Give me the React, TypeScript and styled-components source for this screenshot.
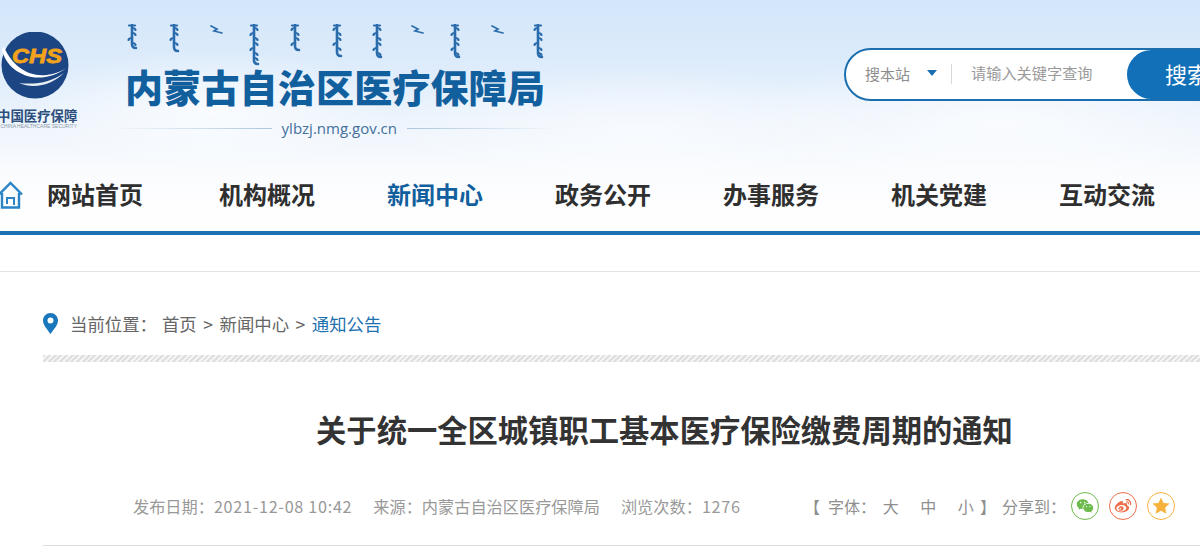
import React from 'react';
import styled, { createGlobalStyle } from 'styled-components';
import { RiWechatFill, RiWeiboFill, RiStarFill } from 'react-icons/ri';

const FONT = '"Noto Sans CJK SC", "Noto Sans", "Liberation Sans", sans-serif';

const GlobalStyle = createGlobalStyle`
  html, body {
    margin: 0;
    padding: 0;
    background: #fff;
    overflow: hidden;
  }
  body {
    font-family: ${FONT};
    color: #333;
  }
`;

const Page = styled.div`
  width: 1320px;
  height: 557px;
  overflow: hidden;
`;

const Header = styled.header`
  height: 231px;
  background:
    radial-gradient(ellipse 190px 60px at 210px 110px, rgba(255, 255, 255, 0.75), rgba(255, 255, 255, 0) 100%),
    radial-gradient(ellipse 260px 60px at 640px 125px, rgba(255, 255, 255, 0.55), rgba(255, 255, 255, 0) 100%),
    radial-gradient(ellipse 260px 70px at 1000px 120px, rgba(255, 255, 255, 0.7), rgba(255, 255, 255, 0) 100%),
    linear-gradient(180deg, #d3e6fa 0%, #deecfb 30%, #f0f6fd 58%, #fbfcfe 76%, #ffffff 100%);
`;

const TopRow = styled.div`
  height: 170px;
  display: flex;
  align-items: flex-start;
`;

const LogoBox = styled.div`
  width: 80px;
  margin-left: -3px;
  padding-top: 32px;
  flex: none;
`;

const LogoName = styled.div`
  font-size: 13.4px;
  line-height: 16px;
  font-weight: 700;
  color: #2d4f7c;
  white-space: nowrap;
  margin-top: 8px;
`;

const LogoSub = styled.div`
  font-family: "Liberation Sans", sans-serif;
  font-size: 5px;
  line-height: 6px;
  color: #8b98a8;
  white-space: nowrap;
  text-align: right;
`;

const TitleBlock = styled.div`
  margin-left: 48px;
  width: 435px;
  flex: none;
  padding-top: 24px;
`;

const ScriptMarks = styled.svg`
  display: block;
`;

const SiteTitle = styled.h1`
  margin: -7px 0 0 0;
  font-size: 38px;
  line-height: 50px;
  font-weight: 900;
  letter-spacing: 0.2px;
  color: #125f9e;
  white-space: nowrap;
`;

const Domain = styled.div`
  display: flex;
  align-items: center;
  gap: 10px;
  margin-top: 7px;
  margin-left: -15px;
  width: 447px;
  font-family: "Open Sans", "Noto Sans", sans-serif;
  font-size: 15px;
  line-height: 20px;
  color: #43709c;
  white-space: nowrap;
`;

const DomainRule = styled.span<{ $dir: 'left' | 'right' }>`
  flex: ${(p) => (p.$dir === 'left' ? '1' : '0 0 150px')};
  height: 1px;
  background: linear-gradient(
    ${(p) => (p.$dir === 'left' ? '90deg' : '270deg')},
    rgba(160, 190, 215, 0) 0%,
    rgba(160, 190, 215, 0.85) 100%
  );
`;

const SearchBox = styled.form`
  display: flex;
  align-items: stretch;
  box-sizing: border-box;
  margin: 48px 0 0 284px;
  width: 360px;
  height: 53px;
  flex: none;
  border: 2px solid #1b6fae;
  border-radius: 27px 0 0 27px;
  background: #fff;
`;

const ScopeSelect = styled.div`
  display: flex;
  align-items: center;
  width: 106px;
  flex: none;
  padding: 0 0 3px 19px;
  box-sizing: border-box;
  font-size: 15px;
  color: #8d8d8d;
  position: relative;
  &::after {
    content: '';
    position: absolute;
    right: 0;
    top: 14px;
    bottom: 15px;
    width: 1px;
    background: #d8d8d8;
  }
`;

const Caret = styled.i`
  width: 0;
  height: 0;
  margin-left: 17px;
  border-left: 5px solid transparent;
  border-right: 5px solid transparent;
  border-top: 6px solid #1b6fae;
`;

const SearchInput = styled.input`
  flex: none;
  width: 174px;
  box-sizing: content-box;
  border: 0;
  outline: 0;
  padding: 0 0 5px 19px;
  background: transparent;
  font-family: ${FONT};
  font-size: 15.2px;
  color: #333;
  &::placeholder {
    color: #9a9a9a;
    opacity: 1;
  }
`;

const SearchButton = styled.button`
  flex: 1;
  border: 0;
  padding: 0 0 3px 38px;
  text-align: left;
  margin-left: -18px;
  background: #1170b8;
  border-radius: 25px 0 0 25px;
  color: #fff;
  font-family: ${FONT};
  font-size: 22px;
  white-space: nowrap;
`;

const Nav = styled.nav`
  display: flex;
  align-items: center;
  height: 61px;
`;

const HomeLink = styled.div`
  display: flex;
  width: 48px;
  flex: none;
  margin-left: -1px;
  margin-top: -9px;
`;

const NavItem = styled.a<{ $active?: boolean }>`
  width: 168px;
  flex: none;
  font-size: 24px;
  line-height: 34px;
  font-weight: 700;
  margin-top: -14px;
  color: ${(p) => (p.$active ? '#125f9e' : '#2f2f2f')};
  white-space: nowrap;
  &:first-of-type {
    width: 172px;
  }
`;

const NavBar = styled.div`
  height: 4px;
  background: #1a72b5;
`;

const SubStrip = styled.div`
  height: 36px;
  border-bottom: 1px solid #e3e3e3;
`;

const Main = styled.main`
  padding-left: 43px;
`;

const Crumbs = styled.div`
  display: flex;
  align-items: center;
  height: 83px;
  padding-top: 20px;
  box-sizing: border-box;
  font-size: 17.4px;
  color: #666;
  white-space: nowrap;
`;

const CrumbLabel = styled.span`
  margin: 0 5px 0 12px;
`;

const CrumbSep = styled.span`
  margin: 0 6.5px;
  font-size: 17.5px;
`;

const CrumbCurrent = styled.span`
  color: #1d71b0;
`;

const Stripes = styled.div`
  height: 7px;
  background: repeating-linear-gradient(135deg, #dedede 0 2px, #f4f4f4 2px 4px);
`;

const ArticleTitle = styled.h2`
  margin: 0;
  padding-top: 45px;
  width: 1243px;
  text-align: center;
  font-size: 30.3px;
  line-height: 44px;
  font-weight: 700;
  color: #333;
  white-space: nowrap;
`;

const MetaRow = styled.div`
  display: flex;
  align-items: center;
  margin-top: 41px;
  width: 1157px;
  box-sizing: border-box;
  padding: 0 25px 26px 90px;
  height: 54px;
  border-bottom: 1px solid #dcdcdc;
  font-size: 16.2px;
  color: #999;
  white-space: nowrap;
`;

const MetaText = styled.span`
  margin-right: 21px;
`;

const MetaNum = styled.span`
  letter-spacing: 0.7px;
`;

const MetaTools = styled.div`
  display: flex;
  align-items: center;
  margin-left: auto;
  font-size: 16px;
  color: #8f8f8f;
`;

const FontLabel = styled.span`
  margin: 0 -4px 0 8px;
`;

const SizeOption = styled.span`
  width: 37.5px;
  text-align: center;
`;

const BracketClose = styled.span`
  margin-left: -4.5px;
`;

const ShareLabel = styled.span`
  margin-left: 6px;
`;

const ShareIcon = styled.span<{ $color: string; $first?: boolean }>`
  display: flex;
  align-items: center;
  justify-content: center;
  box-sizing: border-box;
  width: 28px;
  height: 28px;
  margin-left: ${(p) => (p.$first ? '5px' : '10px')};
  border: 1px solid ${(p) => p.$color};
  border-radius: 50%;
  color: ${(p) => p.$color};
  font-size: 18px;
`;

const SHARE_COLORS = { wechat: '#6dbb4c', weibo: '#ee6d4a', star: '#f6b23c' };

const NAV_ITEMS = ['网站首页', '机构概况', '新闻中心', '政务公开', '办事服务', '机关党建', '互动交流'];

// decorative strokes of the vertical line of script above the site title: [x, y end]
const SCRIPT_COLUMNS: Array<[number, number]> = [
  [7, 24], [49, 27], [91, 9], [129, 40], [170, 26], [212, 32], [252, 33], [292, 5], [330, 33], [372, 9], [413, 33],
];

function ScriptLine() {
  return (
    <ScriptMarks width="425" height="44" viewBox="0 0 425 44" aria-hidden="true">
      <g fill="none" stroke="#2a6cab" strokeLinecap="round">
        {SCRIPT_COLUMNS.map(([x, end]) => {
          if (end < 12) {
            return <path key={x} d={`M${x - 5} 2 l6 3 l-3 2 l8 2`} strokeWidth="1.7" />;
          }
          const ticks = [];
          for (let y = 4; y < end - 3; y += 5) {
            const side = (y + x) % 3 === 0 ? -1 : 1;
            ticks.push(`M${x} ${y} q${side * 3} 0 ${side * 3.5} 2`);
          }
          return (
            <g key={x}>
              <path d={`M${x} 1 V${end - 4} q0 4 4 4`} strokeWidth="2.6" />
              <path d={`M${x - 3} 1.5 h6 ${ticks.join(' ')}`} strokeWidth="2.2" />
            </g>
          );
        })}
      </g>
    </ScriptMarks>
  );
}

function ChsLogo() {
  return (
    <svg width="80" height="67" viewBox="0 0 80 67" style={{ display: 'block' }} aria-hidden="true">
      <circle cx="38" cy="33" r="33.5" fill="#1c4583" />
      <path d="M5 17 C8 38 38 58 70 36 C42 52 18 40 7 15 Z" fill="#fff" />
      <path d="M22 51 C38 58 56 52 67 41 C54 50 40 53 22 51 Z" fill="#fff" opacity="0.9" />
      <text
        x="15"
        y="31"
        fontFamily="Liberation Sans, sans-serif"
        fontSize="20"
        fontWeight="700"
        fontStyle="italic"
        fill="#f2a21b"
        stroke="#f2a21b"
        strokeWidth="0.8"
        textLength="50"
        lengthAdjust="spacingAndGlyphs"
      >
        CHS
      </text>
    </svg>
  );
}

function HomeIcon() {
  return (
    <svg width="24" height="30" viewBox="0 0 24 30" aria-hidden="true">
      <path d="M0 13.5 L11.5 2 L23 13.5" fill="none" stroke="#2a84c6" strokeWidth="2.4" />
      <path d="M3 12 V26.5 H20 V12" fill="none" stroke="#2a84c6" strokeWidth="2.4" />
      <path d="M8 23 V17 H15 V24" fill="none" stroke="#2a84c6" strokeWidth="2" />
    </svg>
  );
}

function PinIcon() {
  return (
    <svg width="15" height="21" viewBox="0 0 15 21" aria-hidden="true">
      <path
        fillRule="evenodd"
        d="M7.5 0 C3.4 0 0 3.3 0 7.4 C0 12 4.6 16.6 7.5 21 C10.4 16.6 15 12 15 7.4 C15 3.3 11.6 0 7.5 0 Z M7.5 4.4 A3 3 0 1 1 7.5 10.4 A3 3 0 1 1 7.5 4.4 Z"
        fill="#1a77bb"
      />
    </svg>
  );
}

export default function App() {
  return (
    <Page>
      <GlobalStyle />
      <Header>
        <TopRow>
          <LogoBox>
            <ChsLogo />
            <LogoName>中国医疗保障</LogoName>
            <LogoSub>CHINA HEALTHCARE SECURITY</LogoSub>
          </LogoBox>
          <TitleBlock>
            <ScriptLine />
            <SiteTitle>内蒙古自治区医疗保障局</SiteTitle>
            <Domain>
              <DomainRule $dir="left" />
              ylbzj.nmg.gov.cn
              <DomainRule $dir="right" />
            </Domain>
          </TitleBlock>
          <SearchBox onSubmit={(e) => e.preventDefault()}>
            <ScopeSelect>
              搜本站
              <Caret />
            </ScopeSelect>
            <SearchInput placeholder="请输入关键字查询" />
            <SearchButton type="submit">搜索</SearchButton>
          </SearchBox>
        </TopRow>
        <Nav>
          <HomeLink>
            <HomeIcon />
          </HomeLink>
          {NAV_ITEMS.map((item) => (
            <NavItem key={item} $active={item === '新闻中心'}>
              {item}
            </NavItem>
          ))}
        </Nav>
      </Header>
      <NavBar />
      <SubStrip />
      <Main>
        <Crumbs>
          <PinIcon />
          <CrumbLabel>当前位置：</CrumbLabel>
          首页
          <CrumbSep>&gt;</CrumbSep>
          新闻中心
          <CrumbSep>&gt;</CrumbSep>
          <CrumbCurrent>通知公告</CrumbCurrent>
        </Crumbs>
        <Stripes />
        <ArticleTitle>关于统一全区城镇职工基本医疗保险缴费周期的通知</ArticleTitle>
        <MetaRow>
          <MetaText>
            发布日期：<MetaNum>2021-12-08 10:42</MetaNum>
          </MetaText>
          <MetaText>来源：内蒙古自治区医疗保障局</MetaText>
          <MetaText>
            浏览次数：<MetaNum>1276</MetaNum>
          </MetaText>
          <MetaTools>
            【
            <FontLabel>字体：</FontLabel>
            <SizeOption>大</SizeOption>
            <SizeOption>中</SizeOption>
            <SizeOption>小</SizeOption>
            <BracketClose>】</BracketClose>
            <ShareLabel>分享到：</ShareLabel>
            <ShareIcon $color={SHARE_COLORS.wechat} $first>
              <RiWechatFill />
            </ShareIcon>
            <ShareIcon $color={SHARE_COLORS.weibo}>
              <RiWeiboFill />
            </ShareIcon>
            <ShareIcon $color={SHARE_COLORS.star}>
              <RiStarFill />
            </ShareIcon>
          </MetaTools>
        </MetaRow>
      </Main>
    </Page>
  );
}
